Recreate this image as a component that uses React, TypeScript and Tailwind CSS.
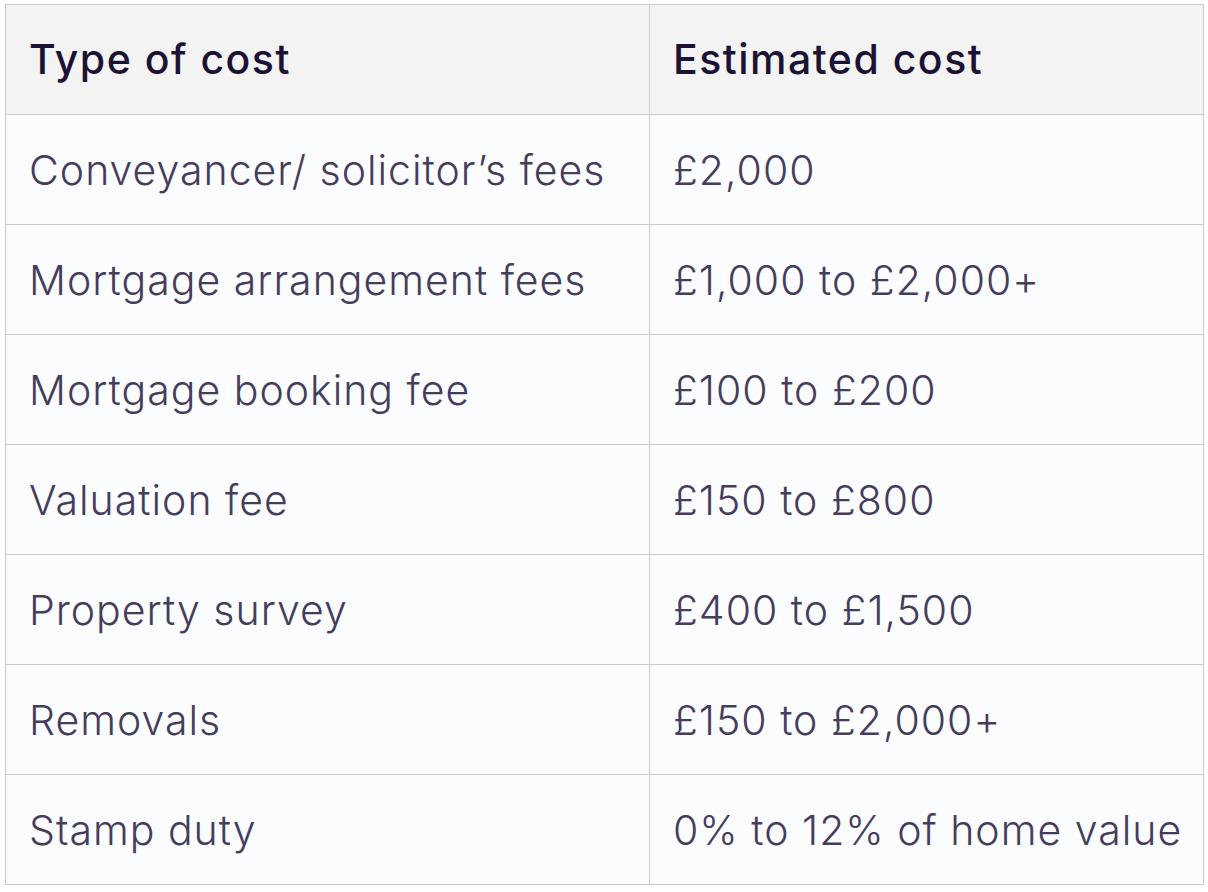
const rows: [string, string][] = [
  ["Conveyancer/ solicitor’s fees", "£2,000"],
  ["Mortgage arrangement fees", "£1,000 to £2,000+"],
  ["Mortgage booking fee", "£100 to £200"],
  ["Valuation fee", "£150 to £800"],
  ["Property survey", "£400 to £1,500"],
  ["Removals", "£150 to £2,000+"],
  ["Stamp duty", "0% to 12% of home value"],
];

export default function App() {
  return (
    <div className="min-h-screen bg-white pt-[4px] pl-[5px] font-['Inter',sans-serif]">
      <table className="w-[1199px] table-fixed border-collapse border border-[#c9c9d3]">
        <colgroup>
          <col className="w-[644px]" />
          <col />
        </colgroup>
        <thead>
          <tr className="h-[110px] bg-[#f3f3f4]">
            <th className="border border-[#c9c9d3] px-[23px] text-left text-[41px] font-medium tracking-[1.5px] text-[#1c1233]">
              Type of cost
            </th>
            <th className="border border-[#c9c9d3] px-[23px] text-left text-[41px] font-medium tracking-[1.5px] text-[#1c1233]">
              Estimated cost
            </th>
          </tr>
        </thead>
        <tbody>
          {rows.map(([type, cost]) => (
            <tr key={type} className="h-[110px] bg-[#fbfcfe]">
              <td className="border border-[#c9c9d3] px-[23px] pt-[3px] whitespace-nowrap text-[41px] font-light tracking-[1px] text-[#463d5c]">
                {type}
              </td>
              <td className="border border-[#c9c9d3] px-[23px] pt-[3px] whitespace-nowrap text-[41px] font-light tracking-[1px] text-[#463d5c]">
                {cost}
              </td>
            </tr>
          ))}
        </tbody>
      </table>
    </div>
  );
}
